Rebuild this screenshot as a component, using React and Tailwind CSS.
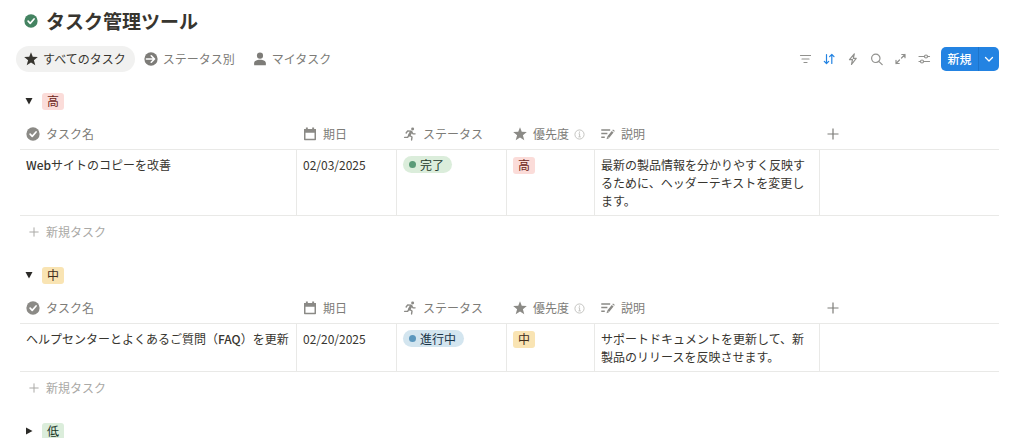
import React, { useState } from "react";

const CheckBadge = ({ className }) => (
  <svg viewBox="0 0 16 16" className={className} aria-hidden="true">
    <circle cx="8" cy="8" r="7.6" fill="currentColor" />
    <path d="M4.7 8.2l2.4 2.5 4.4-5" fill="none" stroke="#fff" strokeWidth="1.9" strokeLinecap="round" strokeLinejoin="round" />
  </svg>
);

const Star = ({ className }) => (
  <svg viewBox="0 0 16 16" className={className} fill="currentColor" aria-hidden="true">
    <path d="M8 .2l2 5.300 5.800.2-4.500 3.600 1.600 5.800L8 11.900l-4.900 3.200 1.600-5.800L.2 5.700l5.800-.2z" />
  </svg>
);

const ArrowBadge = ({ className }) => (
  <svg viewBox="0 0 16 16" className={className} aria-hidden="true">
    <circle cx="8" cy="8" r="7.6" fill="currentColor" />
    <path d="M2.800 8h9.200M8.300 4.300L12 8l-3.700 3.700" fill="none" stroke="#fff" strokeWidth="1.9" strokeLinecap="round" strokeLinejoin="round" />
  </svg>
);

const Person = ({ className }) => (
  <svg viewBox="0 0 16 16" className={className} fill="currentColor" aria-hidden="true">
    <circle cx="8" cy="4.200" r="3.500" />
    <path d="M1.300 15.200v-2.400c0-2.500 3-3.900 6.700-3.900s6.700 1.400 6.700 3.900v2.400z" />
  </svg>
);

const Calendar = ({ className }) => (
  <svg viewBox="0 0 16 16" className={className} aria-hidden="true">
    <path d="M2 3h12v11.200H2z" fill="none" stroke="currentColor" strokeWidth="1.700" strokeLinejoin="round" />
    <path d="M1.200 2.400h13.600v4.200H1.200zM3.300.6h2.200v2.500H3.300zM10.500.6h2.200v2.500h-2.200z" fill="currentColor" />
  </svg>
);

const Runner = ({ className }) => (
  <svg viewBox="0 0 16 16" className={className} fill="none" stroke="currentColor" strokeLinecap="round" strokeLinejoin="round" aria-hidden="true">
    <circle cx="11" cy="2.300" r="1.700" fill="currentColor" stroke="none" />
    <path d="M9.300 5.500L7.200 9.300" strokeWidth="3" />
    <path d="M8.600 4.700L5.400 4.500 3.600 6.900M10 5.800l1.500 2h2.300M7.400 9.500l2.900 1.900-.5 3.400M6.600 9.700l-1.300 2.100H1.800" strokeWidth="1.600" />
  </svg>
);

const Info = ({ className }) => (
  <svg viewBox="0 0 12 12" className={className} aria-hidden="true">
    <circle cx="6" cy="6" r="5" fill="none" stroke="currentColor" strokeWidth=".9" />
    <path d="M5 5.200h1.100v3.300M4.800 8.600h2.600" fill="none" stroke="currentColor" strokeWidth=".9" />
    <circle cx="6" cy="3.400" r=".7" fill="currentColor" />
  </svg>
);

const EditLines = ({ className }) => (
  <svg viewBox="0 0 16 14" className={className} fill="none" stroke="currentColor" aria-hidden="true">
    <path d="M.3 2.300h10.200M.3 6.500h7M.3 10.700h4" strokeWidth="1.700" />
    <path d="M8.200 10.800l5.100-6.300" strokeWidth="2.700" />
    <path d="M13.900 3.700l.9-1.100" strokeWidth="2.700" />
    <path d="M6.300 13.100l.8-3 2.100 1.700z" fill="currentColor" stroke="none" />
  </svg>
);

const Plus = ({ className }) => (
  <svg viewBox="0 0 12 12" className={className} aria-hidden="true">
    <path d="M6 .5v11M.5 6h11" stroke="currentColor" strokeWidth="1.200" />
  </svg>
);

const toolPaths = [
  { label: "フィルター", color: "text-[#91918e]", d: "M3.500 3.500h10M5 7h7M7 10.500h3" },
  { label: "並べ替え", color: "text-[#2383e2]", d: "M5.500 2.500v9M3.300 9.300l2.200 2.200 2.200-2.200M10.800 11.500v-9M8.600 4.700l2.200-2.200L13 4.700" },
  { label: "オートメーション", color: "text-[#91918e]", d: "M9.300 1.800L4.500 7.700h3l-1 4.800 4.700-6.200H8.300z" },
  { label: "検索", color: "text-[#91918e]", d: "M11 6.300a4.200 4.200 0 1 1-8.400 0 4.200 4.200 0 0 1 8.400 0zM9.800 9.300l3.400 3.400" },
  { label: "全画面", color: "text-[#91918e]", d: "M8.500 6L12 2.500M8.800 2.500H12v3.200M6.500 8L3 11.500M3 8.300v3.200h3.200" },
  { label: "設定", color: "text-[#91918e]", d: "M2 4.500h5.500M10.500 4.500H12.500M2 9.500h1.500M6.500 9.500h6M10.500 4.500a1.500 1.500 0 1 1-3 0 1.500 1.500 0 0 1 3 0zM6.500 9.500a1.500 1.500 0 1 1-3 0 1.500 1.500 0 0 1 3 0z" },
];

const tabs = [
  { label: "すべてのタスク", Icon: Star },
  { label: "ステータス別", Icon: ArrowBadge },
  { label: "マイタスク", Icon: Person },
];

const columns = [
  { label: "タスク名", Icon: CheckBadge },
  { label: "期日", Icon: Calendar },
  { label: "ステータス", Icon: Runner },
  { label: "優先度", Icon: Star, info: true },
  { label: "説明", Icon: EditLines },
];

const groups = [
  {
    priority: "高",
    tag: "bg-[#fbdcd9] text-[#6b2420]",
    open: true,
    tasks: [
      {
        name: "Webサイトのコピーを改善",
        due: "02/03/2025",
        status: "完了",
        pill: "bg-[#dbeddb] text-[#1c3829]",
        dot: "bg-[#5b9b78]",
        text: "最新の製品情報を分かりやすく反映するために、ヘッダーテキストを変更します。",
      },
    ],
  },
  {
    priority: "中",
    tag: "bg-[#f9e4b3] text-[#402c1b]",
    open: true,
    tasks: [
      {
        name: "ヘルプセンターとよくあるご質問（FAQ）を更新",
        due: "02/20/2025",
        status: "進行中",
        pill: "bg-[#d3e5ef] text-[#183347]",
        dot: "bg-[#5b97bd]",
        text: "サポートドキュメントを更新して、新製品のリリースを反映させます。",
      },
    ],
  },
  { priority: "低", tag: "bg-[#dbeddb] text-[#1c3829]", open: false, tasks: [] },
];

const Tag = ({ className, children }) => (
  <span className={`inline-flex h-[17px] items-center rounded-[3px] px-[5px] ${className}`}>{children}</span>
);

// Latin words in a task name carry a heavier weight than the kana around them.
const TaskName = ({ children }) =>
  children.split(/([A-Za-z]+)/).map((part, i) =>
    i % 2 ? <span key={i} className="font-medium">{part}</span> : part
  );

function TaskTable({ group }) {
  return (
    <>
      <table className="mt-[9px] w-full table-fixed border-separate border-spacing-0">
        <colgroup>
          <col className="w-[277px]" />
          <col className="w-[100px]" />
          <col className="w-[110px]" />
          <col className="w-[88px]" />
          <col className="w-[225px]" />
          <col />
        </colgroup>
        <thead>
          <tr className="text-[#7d7c78]">
            {columns.map(({ label, Icon, info }) => (
              <th key={label} scope="col" className="h-[31px] border-b border-[#e9e9e7] px-[6px] py-0 text-left font-normal">
                <span className="flex items-center whitespace-nowrap">
                  <Icon className="mr-[6px] size-[14px] shrink-0 text-[#8b8a86]" />
                  {label}
                  {info && <Info className="ml-[5px] size-[11px] shrink-0 text-[#b9b8b5]" />}
                </span>
              </th>
            ))}
            <th scope="col" className="border-b border-[#e9e9e7] px-[7px] py-0 text-left">
              <button type="button" aria-label="列を追加" className="flex"><Plus className="size-[12px]" /></button>
            </th>
          </tr>
        </thead>
        <tbody>
          {group.tasks.map((t) => (
            <tr key={t.name} className="align-top [&>td]:border-b [&>td]:border-[#e9e9e7] [&>td]:px-[6px] [&>td]:pt-[6px] [&>td]:pb-[5px] [&>td:not(:last-child)]:border-r">
              <td className="whitespace-nowrap"><TaskName>{t.name}</TaskName></td>
              <td>{t.due}</td>
              <td>
                <span className={`flex h-[17px] w-fit items-center gap-[4px] rounded-full pr-[8px] pl-[6px] ${t.pill}`}>
                  <span className={`size-[7px] rounded-full ${t.dot}`} />
                  {t.status}
                </span>
              </td>
              <td><Tag className={group.tag}>{group.priority}</Tag></td>
              <td>{t.text}</td>
              <td />
            </tr>
          ))}
        </tbody>
      </table>
      <button type="button" className="flex h-[32px] items-center gap-[7px] pl-[9px] text-[#aaa9a6]">
        <Plus className="size-[10px]" />
        新規タスク
      </button>
    </>
  );
}

function Group({ group }) {
  const [open, setOpen] = useState(group.open);
  return (
    <section className="mb-[18px]">
      <button type="button" aria-expanded={open} onClick={() => setOpen(!open)} className="flex h-[18px] items-center gap-[9px] pl-[5px]">
        <svg viewBox="0 0 8 8" className={`size-[8px] ${open ? "" : "-rotate-90"}`} aria-hidden="true">
          <path d="M.5 1h7L4 7.500z" fill="#2b2a27" />
        </svg>
        <Tag className={group.tag}>{group.priority}</Tag>
      </button>
      {open && <TaskTable group={group} />}
    </section>
  );
}

export default function App() {
  const [active, setActive] = useState(0);
  return (
    <main className="h-screen overflow-hidden bg-white font-['Noto_Sans_CJK_JP',sans-serif] text-[12px] leading-[18px] text-[#37352f]">
      <header className="flex h-[42px] items-center gap-[8px] pl-[24px]">
        <CheckBadge className="size-[14px] text-[#448361]" />
        <h1 className="text-[19px] leading-[24px] font-bold">タスク管理ツール</h1>
      </header>

      <div className="mt-[4px] flex h-[26px] items-center justify-between pr-[25px] pl-[16px]">
        <nav className="flex items-center gap-[1px]">
          {tabs.map(({ label, Icon }, i) => (
            <button
              key={label}
              type="button"
              onClick={() => setActive(i)}
              className={`flex h-[26px] items-center gap-[5px] rounded-full pr-[9px] pl-[8px] ${i === active ? "bg-[#f1f1f0] text-[#37352f]" : "text-[#7d7c78]"}`}
            >
              <Icon className="size-[14px]" />
              {label}
            </button>
          ))}
        </nav>
        <div className="flex items-center gap-[10px]">
          {toolPaths.map((t) => (
            <button key={t.label} type="button" aria-label={t.label} className={t.color}>
              <svg viewBox="0 0 14 14" className="size-[14px]" fill="none" stroke="currentColor" strokeWidth="1.200" strokeLinecap="round" strokeLinejoin="round" aria-hidden="true">
                <path d={t.d} />
              </svg>
            </button>
          ))}
          <div className="flex h-[24px] overflow-hidden rounded-[5px] bg-[#2383e2] text-white">
            <button type="button" className="w-[38px] border-r border-[#1d74ca] font-medium">新規</button>
            <button type="button" aria-label="その他のオプション" className="flex w-[20px] items-center justify-center">
              <svg viewBox="0 0 10 10" className="size-[10px]" fill="none" stroke="currentColor" strokeWidth="1.300" strokeLinecap="round" strokeLinejoin="round" aria-hidden="true">
                <path d="M1.500 3.500L5 7l3.500-3.500" />
              </svg>
            </button>
          </div>
        </div>
      </div>

      <div className="mt-[20px] pr-[25px] pl-[20px]">
        {groups.map((g) => (
          <Group key={g.priority} group={g} />
        ))}
      </div>
    </main>
  );
}
